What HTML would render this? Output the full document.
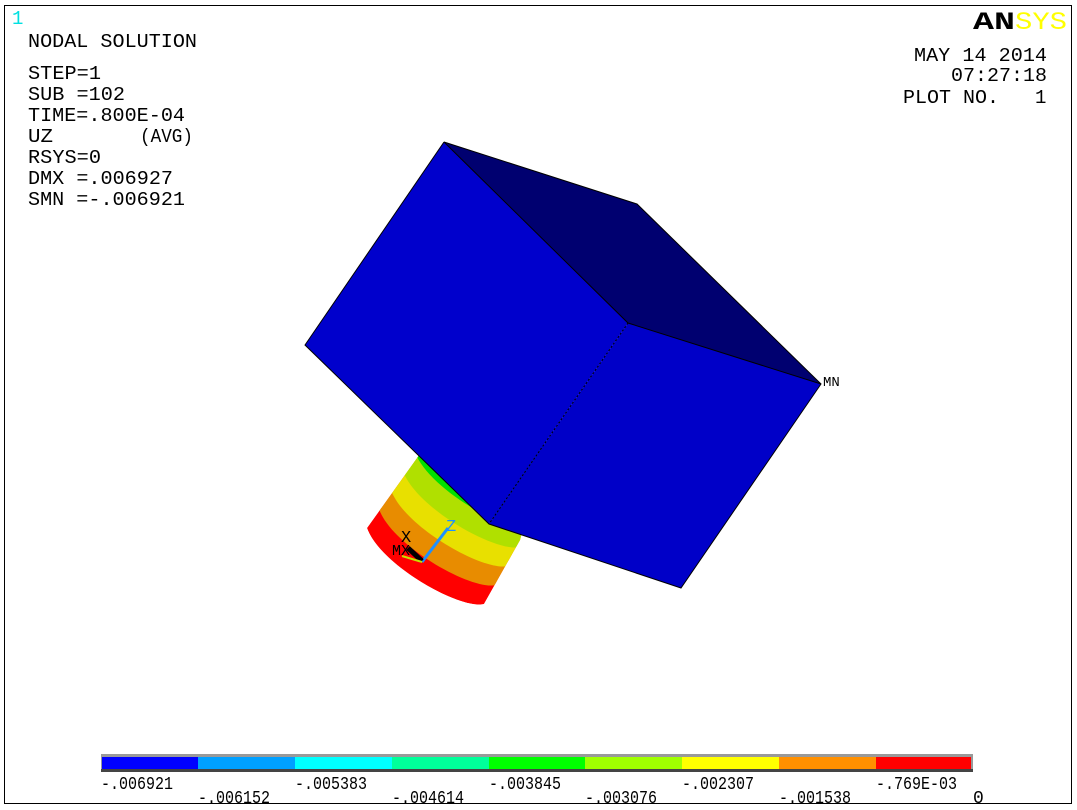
<!DOCTYPE html>
<html><head><meta charset="utf-8"><style>
html,body{margin:0;padding:0;background:#fff;}
body{width:1077px;height:810px;position:relative;overflow:hidden;}
svg{position:absolute;left:0;top:0;}
text{font-family:"Liberation Mono",monospace;}
</style></head><body>
<svg width="1077" height="810" viewBox="0 0 1077 810">
<rect x="4.5" y="5.5" width="1067" height="798" fill="#fff" stroke="#000" stroke-width="1"/>
<g font-size="19" fill="#000">
<text x="12" y="24" fill="#00e0e0">1</text>
<text x="28" y="47" textLength="169" lengthAdjust="spacingAndGlyphs">NODAL SOLUTION</text>
<text x="28" y="79" textLength="73" lengthAdjust="spacingAndGlyphs">STEP=1</text>
<text x="28" y="100" textLength="97" lengthAdjust="spacingAndGlyphs">SUB =102</text>
<text x="28" y="121" textLength="157" lengthAdjust="spacingAndGlyphs">TIME=.800E-04</text>
<text x="28" y="142" textLength="25" lengthAdjust="spacingAndGlyphs">UZ</text>
<text x="140" y="142" textLength="53" lengthAdjust="spacingAndGlyphs">(AVG)</text>
<text x="28" y="163" textLength="73" lengthAdjust="spacingAndGlyphs">RSYS=0</text>
<text x="28" y="184" textLength="145" lengthAdjust="spacingAndGlyphs">DMX =.006927</text>
<text x="28" y="205" textLength="157" lengthAdjust="spacingAndGlyphs">SMN =-.006921</text>
<text x="914" y="61" textLength="133" lengthAdjust="spacingAndGlyphs">MAY 14 2014</text>
<text x="951" y="81" textLength="96" lengthAdjust="spacingAndGlyphs">07:27:18</text>
<text x="903" y="103" textLength="96" lengthAdjust="spacingAndGlyphs">PLOT NO.</text>
<text x="1035" y="103">1</text>
</g>
<text x="973" y="29" font-family="Liberation Sans,sans-serif" font-weight="bold" font-size="25" fill="#000" textLength="42" lengthAdjust="spacingAndGlyphs">AN</text>
<text x="1015" y="29" font-family="Liberation Serif,serif" font-size="25" fill="#ffff00" textLength="52" lengthAdjust="spacingAndGlyphs">SYS</text>
<defs>
<path id="cs" d="M367,528 L430,440 L545,440 L520,540 L484,604 C460,610 380,565 367,528 Z"/>
<clipPath id="cyl"><path d="M367,528 L430,440 L545,440 L520,540 L484,604 C460,610 380,565 367,528 Z"/></clipPath>
</defs>
<g clip-path="url(#cyl)">
<use href="#cs" fill="#ff0000"/>
<use href="#cs" transform="translate(12,-19)" fill="#e88c00"/>
<use href="#cs" transform="translate(24,-38)" fill="#e8e000"/>
<use href="#cs" transform="translate(36,-57)" fill="#b0e000"/>
<use href="#cs" transform="translate(48,-76)" fill="#00e000"/>
</g>
<polygon points="444,142 305,345 489,524 628,323" fill="#0000cc"/>
<polygon points="444,142 637,204 821,384 628,323" fill="#000070"/>
<polygon points="628,323 821,384 681,588 489,524" fill="#0000c8"/>
<polyline points="444,142 305,345 489,524 681,588 821,384 637,204 444,142 628,323 821,384" fill="none" stroke="#000" stroke-width="1"/>
<line x1="628" y1="323" x2="489" y2="524" stroke="#000" stroke-dasharray="2,2"/>
<line x1="422" y1="562" x2="448" y2="528" stroke="#1e90ff" stroke-width="3"/>
<line x1="422" y1="561" x2="408" y2="548" stroke="#000" stroke-width="5"/>
<line x1="422" y1="562" x2="402" y2="556" stroke="#c8e000" stroke-width="2"/>
<text x="446" y="531" font-size="17" font-family="Liberation Serif,serif" fill="#1e90ff">Z</text>
<text x="401" y="542" font-size="17" font-family="Liberation Serif,serif" fill="#000">X</text>
<text x="392" y="555" font-size="15" font-family="Liberation Serif,serif" fill="#000">MX</text>
<text x="823" y="386" font-size="14" font-family="Liberation Serif,serif" fill="#000">MN</text>
<rect x="101" y="754" width="872" height="18" fill="#999"/>
<rect x="101" y="769" width="872" height="3" fill="#444"/>
<rect x="102" y="757" width="96" height="12" fill="#0000ff"/>
<rect x="198" y="757" width="97" height="12" fill="#00a0ff"/>
<rect x="295" y="757" width="97" height="12" fill="#00ffff"/>
<rect x="392" y="757" width="97" height="12" fill="#00ff9a"/>
<rect x="489" y="757" width="96" height="12" fill="#00ff00"/>
<rect x="585" y="757" width="97" height="12" fill="#a0ff00"/>
<rect x="682" y="757" width="97" height="12" fill="#ffff00"/>
<rect x="779" y="757" width="97" height="12" fill="#ff9000"/>
<rect x="876" y="757" width="95" height="12" fill="#ff0000"/>
<g font-size="18" fill="#000">
<text x="101" y="789" textLength="72" lengthAdjust="spacingAndGlyphs">-.006921</text>
<text x="198" y="803" textLength="72" lengthAdjust="spacingAndGlyphs">-.006152</text>
<text x="295" y="789" textLength="72" lengthAdjust="spacingAndGlyphs">-.005383</text>
<text x="392" y="803" textLength="72" lengthAdjust="spacingAndGlyphs">-.004614</text>
<text x="489" y="789" textLength="72" lengthAdjust="spacingAndGlyphs">-.003845</text>
<text x="585" y="803" textLength="72" lengthAdjust="spacingAndGlyphs">-.003076</text>
<text x="682" y="789" textLength="72" lengthAdjust="spacingAndGlyphs">-.002307</text>
<text x="779" y="803" textLength="72" lengthAdjust="spacingAndGlyphs">-.001538</text>
<text x="876" y="789" textLength="81" lengthAdjust="spacingAndGlyphs">-.769E-03</text>
<text x="973" y="803">0</text>
</g>
</svg>
</body></html>
